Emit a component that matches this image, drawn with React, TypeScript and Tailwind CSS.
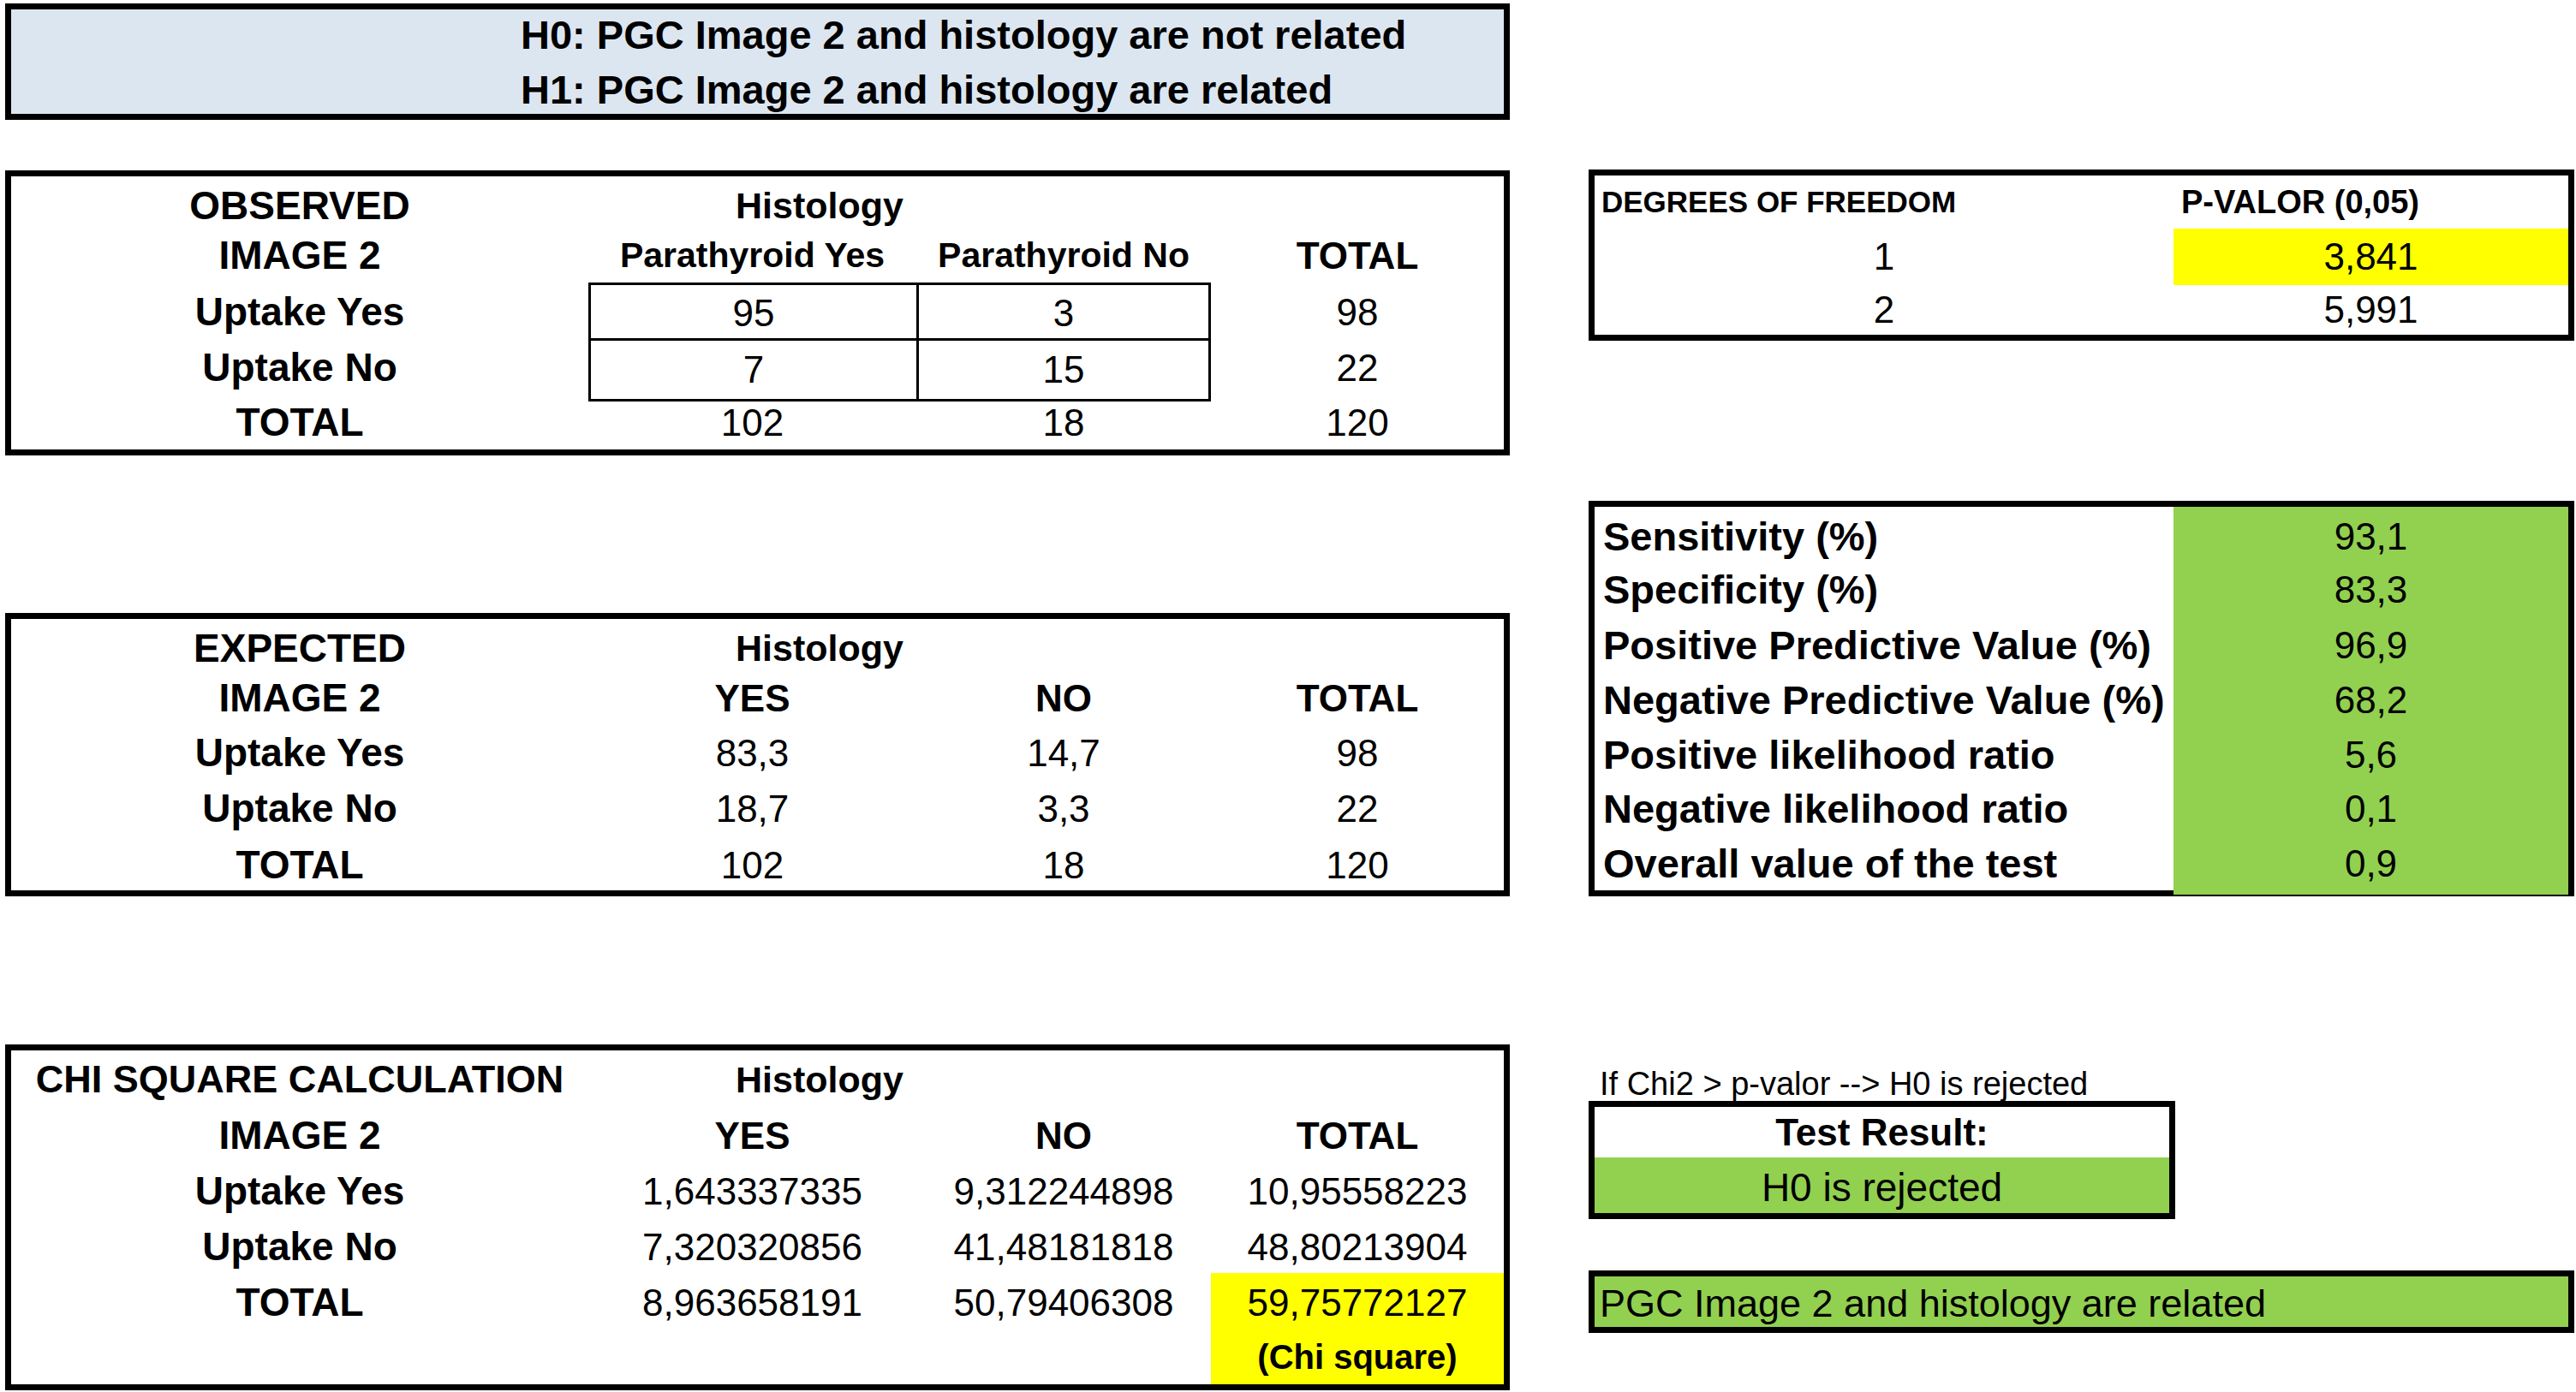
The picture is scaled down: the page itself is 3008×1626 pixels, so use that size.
import React from "react";

const FONT = "font-['Liberation_Sans',Arial,Helvetica,sans-serif]";

type CellProps = { children?: React.ReactNode; className?: string };

function C({ children, className = "" }: CellProps) {
  return <div className={`flex items-center justify-center whitespace-nowrap ${className}`}>{children}</div>;
}

const LBL = "text-[46px] font-bold";
const NUM = "text-[44px]";
const HDR = "text-[44px] font-bold";
const LEFT_COLS = "grid grid-cols-[674px_383px_344px_342px]";

function Histology() {
  return (
    <div className="col-span-3 flex items-center pl-[172px] text-[43px] font-bold whitespace-nowrap">Histology</div>
  );
}

function Observed() {
  return (
    <div className="mt-[59px] border-[7px] border-black bg-white">
      <div className={`${LEFT_COLS} h-[58px] pb-[10px]`}>
        <C className={LBL}>OBSERVED</C>
        <Histology />
      </div>
      <div className={`${LEFT_COLS} h-[66px]`}>
        <C className={LBL}>IMAGE 2</C>
        <C className="text-[41px] font-bold">Parathyroid Yes</C>
        <C className="text-[41px] font-bold">Parathyroid No</C>
        <C className={HDR}>TOTAL</C>
      </div>
      <div className={`${LEFT_COLS} h-[65px]`}>
        <C className={LBL}>Uptake Yes</C>
        <C className={`${NUM} border-l-[3px] border-t-[3px] border-black`}>95</C>
        <C className={`${NUM} border-l-[3px] border-t-[3px] border-r-[3px] border-black`}>3</C>
        <C className={NUM}>98</C>
      </div>
      <div className={`${LEFT_COLS} h-[64px]`}>
        <C className={`${LBL} pb-[5px]`}>Uptake No</C>
        <C className={`${NUM} border-l-[3px] border-t-[3px] border-b-[3px] border-black`}>7</C>
        <C className={`${NUM} border-[3px] border-black`}>15</C>
        <C className={`${NUM} pb-[5px]`}>22</C>
      </div>
      <div className={`${LEFT_COLS} h-[66px]`}>
        <C className={LBL}>TOTAL</C>
        <C className={NUM}>102</C>
        <C className={NUM}>18</C>
        <C className={NUM}>120</C>
      </div>
    </div>
  );
}

function Expected() {
  const data: [string, string, string, string, string][] = [
    ["Uptake Yes", "83,3", "14,7", "98", "h-[65px]"],
    ["Uptake No", "18,7", "3,3", "22", "h-[64px]"],
    ["TOTAL", "102", "18", "120", "h-[66px] pt-[2px]"],
  ];
  return (
    <div className="mt-[184px] border-[7px] border-black bg-white">
      <div className={`${LEFT_COLS} h-[58px] pb-[10px]`}>
        <C className={LBL}>EXPECTED</C>
        <Histology />
      </div>
      <div className={`${LEFT_COLS} h-[64px]`}>
        <C className={LBL}>IMAGE 2</C>
        <C className={HDR}>YES</C>
        <C className={HDR}>NO</C>
        <C className={HDR}>TOTAL</C>
      </div>
      {data.map((r) => (
        <div key={r[0]} className={`${LEFT_COLS} ${r[4]}`}>
          <C className={LBL}>{r[0]}</C>
          <C className={NUM}>{r[1]}</C>
          <C className={NUM}>{r[2]}</C>
          <C className={NUM}>{r[3]}</C>
        </div>
      ))}
    </div>
  );
}

function ChiSquare() {
  const row = `${LEFT_COLS} h-[65px]`;
  return (
    <div className="mt-[173px] border-[7px] border-black bg-white">
      <div className={`${row} pb-[2px]`}>
        <C className="text-[45px] font-bold">CHI SQUARE CALCULATION</C>
        <Histology />
      </div>
      <div className={row}>
        <C className={LBL}>IMAGE 2</C>
        <C className={HDR}>YES</C>
        <C className={HDR}>NO</C>
        <C className={HDR}>TOTAL</C>
      </div>
      <div className={row}>
        <C className={LBL}>Uptake Yes</C>
        <C className={NUM}>1,643337335</C>
        <C className={NUM}>9,312244898</C>
        <C className={NUM}>10,95558223</C>
      </div>
      <div className={row}>
        <C className={LBL}>Uptake No</C>
        <C className={NUM}>7,320320856</C>
        <C className={NUM}>41,48181818</C>
        <C className={NUM}>48,80213904</C>
      </div>
      <div className={row}>
        <C className={LBL}>TOTAL</C>
        <C className={NUM}>8,963658191</C>
        <C className={NUM}>50,79406308</C>
        <C className={`${NUM} bg-[#ffff00]`}>59,75772127</C>
      </div>
      <div className={row}>
        <div />
        <div />
        <div />
        <C className="text-[40px] font-bold bg-[#ffff00]">(Chi square)</C>
      </div>
    </div>
  );
}

function DegreesOfFreedom() {
  const row = "grid grid-cols-[676px_461px] h-[62px]";
  return (
    <div className="mt-[198px] border-[7px] border-black bg-white">
      <div className={row}>
        <div className="flex items-center pl-[8px] text-[35px] font-bold whitespace-nowrap">DEGREES OF FREEDOM</div>
        <div className="flex items-center pl-[9px] text-[38px] font-bold whitespace-nowrap">P-VALOR (0,05)</div>
      </div>
      <div className={row}>
        <C className={NUM}>1</C>
        <C className={`${NUM} bg-[#ffff00]`}>3,841</C>
      </div>
      <div className={row}>
        <C className={NUM}>2</C>
        <C className={NUM}>5,991</C>
      </div>
    </div>
  );
}

function Metrics() {
  const rows: [string, string, string][] = [
    ["Sensitivity (%)", "93,1", "h-[60px] pb-[6px]"],
    ["Specificity (%)", "83,3", "h-[67px] pt-[2px]"],
    ["Positive Predictive Value (%)", "96,9", "h-[64px]"],
    ["Negative Predictive Value (%)", "68,2", "h-[64px]"],
    ["Positive likelihood ratio", "5,6", "h-[63px]"],
    ["Negative likelihood ratio", "0,1", "h-[64px]"],
    ["Overall value of the test", "0,9", "h-[66px]"],
  ];
  return (
    <div className="mt-[187px] border-[7px] border-black bg-white">
      {rows.map(([label, value, h]) => (
        <div key={label} className={`grid grid-cols-[676px_461px] ${h.split(" ")[0]}`}>
          <div className={`flex items-center pl-[10px] text-[47px] font-bold whitespace-nowrap ${h.split(" ")[1] ?? ""}`}>
            {label}
          </div>
          <C className={`${NUM} bg-[#92d050] ${h.split(" ")[1] ?? ""}`}>{value}</C>
        </div>
      ))}
    </div>
  );
}

function Result() {
  return (
    <>
      <div className="mt-[200px] pl-[13px] text-[38px] leading-[38px] whitespace-nowrap">
        If Chi2 &gt; p-valor --&gt; H0 is rejected
      </div>
      <div className="mt-[1px] w-[685px] border-[7px] border-black bg-white">
        <C className="h-[59px] text-[44px] font-bold">Test Result:</C>
        <C className="h-[65px] pt-[5px] text-[46px] bg-[#92d050]">H0 is rejected</C>
      </div>
      <div className="mt-[60px] h-[73px] border-[7px] border-black bg-[#92d050] flex items-center pl-[6px] pt-[5px] text-[45px] whitespace-nowrap">
        PGC Image 2 and histology are related
      </div>
    </>
  );
}

export default function App() {
  return (
    <div className={`${FONT} w-[3008px] h-[1626px] bg-white text-black overflow-hidden flex`}>
      <div className="ml-[6px] w-[1757px] flex flex-col">
        <div className="mt-[4px] h-[136px] border-[7px] border-black bg-[#dce6f1] pl-[595px] flex flex-col">
          <div className="h-[60px] flex items-center text-[47px] font-bold whitespace-nowrap">
            H0: PGC Image 2 and histology are not related
          </div>
          <div className="h-[62px] pt-[6px] flex items-center text-[47px] font-bold whitespace-nowrap">
            H1: PGC Image 2 and histology are related
          </div>
        </div>
        <Observed />
        <Expected />
        <ChiSquare />
      </div>
      <div className="ml-[92px] w-[1151px] flex flex-col">
        <DegreesOfFreedom />
        <Metrics />
        <Result />
      </div>
    </div>
  );
}
